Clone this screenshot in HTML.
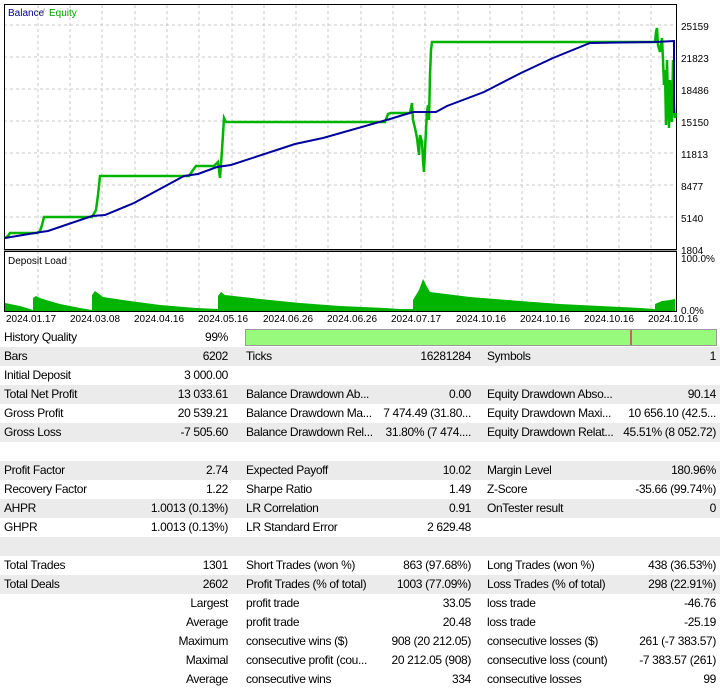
<!DOCTYPE html>
<html><head><meta charset="utf-8"><style>
body{margin:0;width:720px;height:687px;background:#fff;overflow:hidden;font-family:"Liberation Sans",sans-serif;}
svg{position:absolute;left:0;top:0}
.t{position:absolute;left:0;top:328px;width:720px}
.r{height:19px;position:relative;font-size:12px;line-height:19px;color:#000;letter-spacing:-0.35px}
.g{background:#ebebeb}
.r span{position:absolute;white-space:nowrap}
.a{left:4px}.b{right:492px}.c{left:246px}.d{right:249px}.e{left:487px}.f{right:4px}
</style></head><body>
<svg width="720" height="327" viewBox="0 0 720 327" font-family="Liberation Sans,sans-serif">
<rect x="0" y="0" width="720" height="327" fill="#fff"/>
<g stroke="#c8c8c8" stroke-dasharray="3,3" stroke-width="1">
<path d="M4 25H676M4 57H676M4 89H676M4 121H676M4 153H676M4 185H676M4 217H676"/>
<path d="M38 5V311M70 5V311M102 5V311M135 5V311M167 5V311M199 5V311M232 5V311M264 5V311M296 5V311M328 5V311M361 5V311M393 5V311M425 5V311M458 5V311M490 5V311M522 5V311M554 5V311M587 5V311M619 5V311M651 5V311"/>
</g>
<rect x="4.5" y="4.5" width="672" height="245" fill="none" stroke="#000"/>
<rect x="4.5" y="251.5" width="672" height="60" fill="none" stroke="#000"/>
<line x1="4" y1="250.5" x2="677" y2="250.5" stroke="#999"/>
<text x="8" y="16" font-size="10" fill="#00008b">Balance</text><text x="42" y="16" font-size="10" fill="#888">/</text><text x="49" y="16" font-size="10" fill="#00a000">Equity</text>
<text x="8" y="264" font-size="10" fill="#000">Deposit Load</text>
<g font-size="10" fill="#000">
<text x="681" y="30">25159</text><text x="681" y="62">21823</text><text x="681" y="94">18486</text><text x="681" y="126">15150</text><text x="681" y="158">11813</text><text x="681" y="190">8477</text><text x="681" y="222">5140</text><text x="681" y="254">1804</text>
<text x="681" y="262">100.0%</text><text x="681" y="314">0.0%</text>
<g font-size="10">
<text x="6" y="322">2024.01.17</text><text x="70" y="322">2024.03.08</text><text x="134" y="322">2024.04.16</text><text x="198" y="322">2024.05.16</text><text x="263" y="322">2024.06.26</text><text x="327" y="322">2024.06.26</text><text x="391" y="322">2024.07.17</text><text x="456" y="322">2024.10.16</text><text x="520" y="322">2024.10.16</text><text x="584" y="322">2024.10.16</text><text x="648" y="322">2024.10.16</text>
</g></g>
<path fill="#00b400" d="M5 311V303L20 306L30 309L33 310V298L36 296L40 298L46 300L60 304L80 308L92 310V295L95 291L99 294L103 297L130 301L160 305L196 308L218 309V296L221 292L225 295L260 299L300 303L340 306L385 308L400 309L413 309V300L419 290L423 279L426 285L430 292L470 297L520 301L560 304L600 306L640 308L655 309V304L662 301L670 300L675 299V311Z"/>
<path fill="none" stroke="#00b400" stroke-width="2.5" d="M5 238L8 236L10 233L37 233L40 231L42 225L44 217L92 217L96 210L98 195L100 176L189 176L193 170L196 166L214 166L218 162L220 178L222 150L224 118L226 122L385 122L388 114L391 113L410 113"/>
<path fill="none" stroke="#00b400" stroke-width="2.5" d="M410 113L412 103L413 120L415 128L417 138L419 155L420 135L422 142L423 160L424 172L425 150L426 130L427 112L428 105L429 120L430 75L431 50L432 42L655 42L656 32L657 28L658 45L660 52L662 38L663 60L664 85L665 70L666 125L667 60L668 100L669 128L670 80L671 115L672 122L673 60L674 108L675 118L676 113"/>
<path fill="none" stroke="#00009c" stroke-width="2" d="M5 238L41 232L48 231L92 216L105 215L134 203L184 176L198 174L217 167L231 165L295 144L323 138L390 119L413 112L436 112L447 106L484 92L521 73L553 58L590 43L655 42L674 41V113"/>
</svg>
<div class="t">
<div class="r"><span class="a">History Quality</span><span class="b">99%</span><div style="position:absolute;left:245px;top:1px;width:470px;height:15px;background:#98fa7c;border:1px solid #9a9a9a"></div><div style="position:absolute;left:630px;top:2px;width:2px;height:15px;background:#c86464"></div></div>
<div class="r g"><span class="a">Bars</span><span class="b">6202</span><span class="c">Ticks</span><span class="d">16281284</span><span class="e">Symbols</span><span class="f">1</span></div>
<div class="r"><span class="a">Initial Deposit</span><span class="b">3 000.00</span></div>
<div class="r g"><span class="a">Total Net Profit</span><span class="b">13 033.61</span><span class="c">Balance Drawdown Ab...</span><span class="d">0.00</span><span class="e">Equity Drawdown Abso...</span><span class="f">90.14</span></div>
<div class="r"><span class="a">Gross Profit</span><span class="b">20 539.21</span><span class="c">Balance Drawdown Ma...</span><span class="d">7 474.49 (31.80...</span><span class="e">Equity Drawdown Maxi...</span><span class="f">10 656.10 (42.5...</span></div>
<div class="r g"><span class="a">Gross Loss</span><span class="b">-7 505.60</span><span class="c">Balance Drawdown Rel...</span><span class="d">31.80% (7 474....</span><span class="e">Equity Drawdown Relat...</span><span class="f">45.51% (8 052.72)</span></div>
<div class="r"></div>
<div class="r g"><span class="a">Profit Factor</span><span class="b">2.74</span><span class="c">Expected Payoff</span><span class="d">10.02</span><span class="e">Margin Level</span><span class="f">180.96%</span></div>
<div class="r"><span class="a">Recovery Factor</span><span class="b">1.22</span><span class="c">Sharpe Ratio</span><span class="d">1.49</span><span class="e">Z-Score</span><span class="f">-35.66 (99.74%)</span></div>
<div class="r g"><span class="a">AHPR</span><span class="b">1.0013 (0.13%)</span><span class="c">LR Correlation</span><span class="d">0.91</span><span class="e">OnTester result</span><span class="f">0</span></div>
<div class="r"><span class="a">GHPR</span><span class="b">1.0013 (0.13%)</span><span class="c">LR Standard Error</span><span class="d">2 629.48</span></div>
<div class="r g"></div>
<div class="r"><span class="a">Total Trades</span><span class="b">1301</span><span class="c">Short Trades (won %)</span><span class="d">863 (97.68%)</span><span class="e">Long Trades (won %)</span><span class="f">438 (36.53%)</span></div>
<div class="r g"><span class="a">Total Deals</span><span class="b">2602</span><span class="c">Profit Trades (% of total)</span><span class="d">1003 (77.09%)</span><span class="e">Loss Trades (% of total)</span><span class="f">298 (22.91%)</span></div>
<div class="r"><span class="b">Largest</span><span class="c">profit trade</span><span class="d">33.05</span><span class="e">loss trade</span><span class="f">-46.76</span></div>
<div class="r"><span class="b">Average</span><span class="c">profit trade</span><span class="d">20.48</span><span class="e">loss trade</span><span class="f">-25.19</span></div>
<div class="r"><span class="b">Maximum</span><span class="c">consecutive wins ($)</span><span class="d">908 (20 212.05)</span><span class="e">consecutive losses ($)</span><span class="f">261 (-7 383.57)</span></div>
<div class="r"><span class="b">Maximal</span><span class="c">consecutive profit (cou...</span><span class="d">20 212.05 (908)</span><span class="e">consecutive loss (count)</span><span class="f">-7 383.57 (261)</span></div>
<div class="r"><span class="b">Average</span><span class="c">consecutive wins</span><span class="d">334</span><span class="e">consecutive losses</span><span class="f">99</span></div>
</div>
</body></html>
